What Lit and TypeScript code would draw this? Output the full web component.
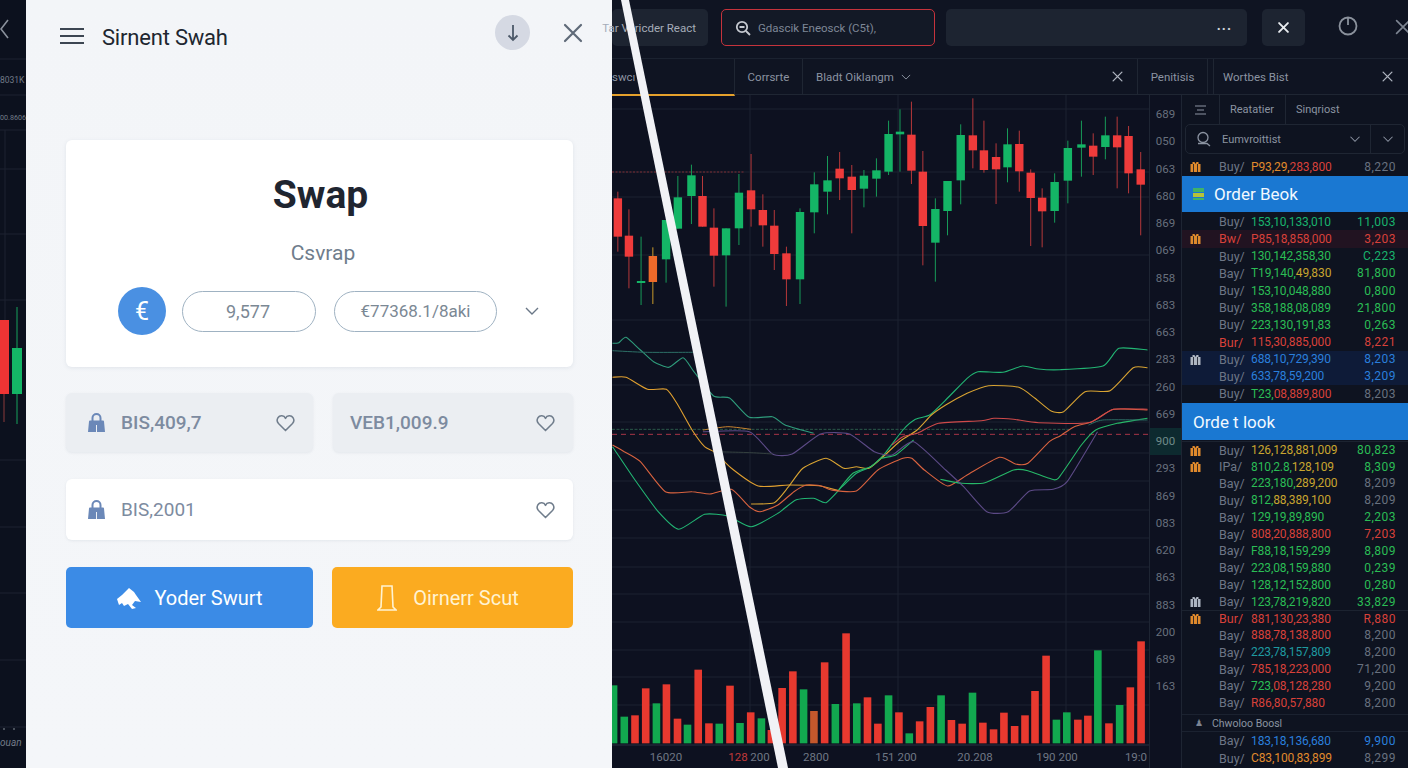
import { LitElement, html, css, svg } from "lit";
import { customElement } from "lit/decorators.js";

const X = (z: number) => 610 + z / 2.8;
const YT = (z: number) => z / 3;
const YL = (z: number) => 330 + z / 3;
const YB = (z: number) => 570 + z / 3;

// zoom-space candles: centre, bodyTop, bodyBottom, wickTop, wickBottom, colour
const candles: [number, number, number, number, number, string][] = [
  [22,595,710,575,755,"r"],[53,707,770,628,865,"r"],[87,843,848,710,915,"g"],[120,768,846,742,912,"o"],
  [157,660,778,660,848,"g"],[190,592,686,528,686,"g"],[228,526,588,494,672,"g"],[259,588,680,528,680,"r"],
  [291,683,767,625,860,"r"],[325,685,766,685,920,"g"],[361,578,685,522,735,"g"],[395,571,628,462,680,"r"],
  [428,630,676,583,740,"r"],[460,677,762,630,810,"r"],[494,760,838,740,918,"r"],[532,636,838,625,912,"g"],
  [572,553,637,517,700,"g"],[609,541,575,468,643,"g"],[643,506,535,456,600,"r"],[677,530,570,495,700,"r"],
  [711,527,566,510,622,"g"],[746,511,536,475,590,"g"],[780,402,515,362,525,"g"],[812,395,403,328,515,"g"],
  [844,404,512,305,552,"r"],[876,515,678,453,796,"r"],[911,627,728,595,845,"g"],[945,543,633,543,706,"g"],
  [982,405,541,373,613,"g"],[1016,406,451,295,505,"r"],[1047,451,510,362,518,"r"],[1081,471,508,430,612,"r"],
  [1113,433,502,385,547,"g"],[1146,432,514,392,575,"r"],[1178,518,594,508,738,"r"],[1210,593,634,565,742,"r"],
  [1245,546,633,520,668,"g"],[1282,444,542,422,610,"g"],[1320,433,443,362,530,"g"],[1353,437,470,400,525,"r"],
  [1387,406,441,350,478,"g"],[1420,406,442,350,565,"r"],[1452,408,520,378,580,"r"],[1486,508,554,456,706,"r"],
];

const bars: [number, number, string][] = [
  [10,346,"g"],[40,440,"g"],[70,436,"r"],[100,355,"r"],[130,400,"g"],[158,343,"r"],[189,446,"r"],[217,464,"g"],
  [247,299,"r"],[277,460,"r"],[306,461,"g"],[336,347,"r"],[364,459,"g"],[394,427,"r"],[424,445,"g"],[452,480,"r"],
  [482,354,"r"],[512,304,"r"],[542,358,"g"],[571,423,"o"],[601,277,"r"],[631,402,"g"],[661,190,"r"],[691,400,"g"],
  [721,382,"r"],[750,461,"r"],[780,376,"g"],[809,427,"r"],[838,490,"g"],[867,454,"r"],[897,411,"r"],[927,376,"g"],
  [956,450,"r"],[986,461,"r"],[1015,368,"g"],[1044,458,"r"],[1074,478,"r"],[1103,428,"r"],[1133,468,"r"],[1162,436,"r"],
  [1190,363,"r"],[1221,257,"r"],[1250,449,"g"],[1279,427,"g"],[1310,449,"r"],[1338,437,"r"],[1366,241,"g"],[1397,460,"r"],
  [1427,405,"g"],[1457,352,"r"],[1487,214,"r"],
];

const lines: [string, number, number[][]][] = [
  ["#2f9d7c",1.1,[[7,40],[25,38],[45,22],[85,60],[122,95],[165,112],[205,83],[235,125],[290,198],[335,204],[390,262],[455,260],[490,285],[570,310]]],
  ["#2d6f66",1,[[7,62],[100,67],[235,67]]],
  ["#22b573",1.1,[[7,350],[70,450],[135,545],[192,598],[265,553],[330,558],[395,590],[470,550],[520,510],[570,505],[605,518],[650,470],[690,430],[730,410],[770,370],[820,300],[855,268],[895,255],[940,210],[1000,145],[1030,125],[1100,127],[1155,108],[1200,117],[1260,119],[1380,108],[1425,55],[1505,60]]],
  ["#e0a030",1.1,[[7,142],[45,142],[105,178],[158,178],[190,225],[230,300],[265,350],[295,368],[340,415],[415,468],[500,465],[585,467],[640,482]]],
  ["#d9a432",1.1,[[395,522],[460,518],[500,470],[540,415],[605,385],[655,415],[690,410],[725,415],[770,375],[810,335],[860,300],[900,255],[940,225],[1000,190],[1060,167],[1145,172],[1190,205],[1235,243],[1270,245],[1330,185],[1400,182],[1465,113],[1505,113]]],
  ["#d9633f",1.1,[[7,345],[40,365],[85,395],[155,485],[230,485],[280,492],[340,478],[390,530],[420,545],[470,525],[515,485],[550,465],[590,467],[620,480],[690,483],[750,420],[820,385],[845,385],[880,420],[945,468],[1000,435],[1090,382],[1135,402],[1170,400],[1230,335],[1260,318],[1300,290],[1350,275],[1410,238],[1505,240]]],
  ["#cf4a4a",1.1,[[790,345],[820,320],[860,310],[920,280],[1040,272],[1075,265],[1130,268],[1200,278],[1340,278],[1410,238],[1505,238]]],
  ["#c9852f",1,[[260,300],[330,290],[395,298]]],
  ["#27b868",1.1,[[640,480],[680,430],[730,410],[760,385],[800,375],[850,330]]],
  ["#27b868",1.1,[[925,448],[985,460],[1050,458],[1130,420],[1170,422],[1230,445],[1255,445],[1320,345],[1360,300],[1420,280],[1505,265]]],
  ["#5c4a86",1.1,[[260,305],[390,305],[455,372],[510,372],[590,312],[670,312],[740,365],[790,375],[850,335],[940,420],[990,470],[1055,545],[1115,545],[1175,483],[1240,478],[1280,455],[1365,305]]],
  ["#34403f",1,[[295,365],[395,368],[455,372]]],
  ["#2d6f66",1,[[1340,285],[1380,270],[1505,270]]],
];

const smooth = (p: number[][]) => {
  const q = p.map(([x, y]) => [X(x), YL(y)]);
  let d = `M${q[0][0].toFixed(1)} ${q[0][1].toFixed(1)}`;
  for (let i = 0; i < q.length - 1; i++) {
    const a = q[Math.max(i - 1, 0)], b = q[i], c = q[i + 1], e = q[Math.min(i + 2, q.length - 1)];
    const t = 0.1;
    d += ` C${(b[0] + (c[0] - a[0]) * t).toFixed(1)} ${(b[1] + (c[1] - a[1]) * t).toFixed(1)} ${(c[0] - (e[0] - b[0]) * t).toFixed(1)} ${(c[1] - (e[1] - b[1]) * t).toFixed(1)} ${c[0].toFixed(1)} ${c[1].toFixed(1)}`;
  }
  return d;
};

const hLines = [109,172,197,255,320,385,422,453,481,510,538,567,594,622,650,677,705];
const vLines = [750,898,1066];
const axis = ["689","050","063","680","869","069","858","683","663","283","260","669","900","293","869","083","620","863","883","200","689","163"];
const timeLabels: [number, string][] = [[666,"16020"],[760,"200"],[816,"2800"],[896,"151 200"],[975,"20.208"],[1057,"190 200"],[1136,"19:0"]];

type Seg = [string, string];
type Row = { i?: string; b: string; bc?: string; p: Seg[]; s: string; sc: string; t?: string };

const first: Row[] = [{ i: "o", b: "Buy/", p: [["P93,29,", "o"], ["283,800", "r"]], s: "8,220", sc: "gy" }];
const second: Row[] = [
  { b: "Buy/", p: [["153,10,133,010", "t"]], s: "11,003", sc: "t" },
  { i: "o", b: "Bw/", bc: "r", p: [["P85,18,858,000", "r"]], s: "3,203", sc: "r", t: "tr" },
  { b: "Buy/", p: [["130,142,358,30", "g"]], s: "C,223", sc: "t" },
  { b: "Bay/", p: [["T19,140,", "g"], ["49,830", "y"]], s: "81,800", sc: "g" },
  { b: "Buy/", p: [["153,10,048,880", "g"]], s: "0,800", sc: "g" },
  { b: "Buy/", p: [["358,188,08,089", "g"]], s: "21,800", sc: "g" },
  { b: "Buy/", p: [["223,130,191,83", "g"]], s: "0,263", sc: "g" },
  { b: "Bur/", bc: "r", p: [["115,30,885,000", "r"]], s: "8,221", sc: "r" },
  { i: "w", b: "Buy/", p: [["688,10,729,390", "b"]], s: "8,203", sc: "b", t: "tb" },
  { b: "Buy/", p: [["633,78,59,200", "b"]], s: "3,209", sc: "b", t: "tb" },
  { b: "Buy/", p: [["T23,", "g"], ["08,889,800", "r"]], s: "8,203", sc: "gy" },
];
const third: Row[] = [
  { i: "o", b: "Buy/", p: [["126,128,881,009", "y"]], s: "80,823", sc: "g", t: "tl" },
  { i: "o", b: "IPa/", p: [["810,2.8,", "g"], ["128,109", "y"]], s: "8,309", sc: "g" },
  { b: "Bay/", p: [["223,180,", "g"], ["289,200", "y"]], s: "8,209", sc: "gy" },
  { b: "Buy/", p: [["812,", "g"], ["88,389,100", "y"]], s: "8,209", sc: "gy" },
  { b: "Bay/", p: [["129,19,89,890", "g"]], s: "2,203", sc: "g" },
  { b: "Bay/", p: [["808,20,888,800", "r"]], s: "7,203", sc: "r" },
  { b: "Bay/", p: [["F88,18,159,299", "g"]], s: "8,809", sc: "g" },
  { b: "Bay/", p: [["223,08,159,880", "g"]], s: "0,239", sc: "g" },
  { b: "Bay/", p: [["128,12,152,800", "g"]], s: "0,280", sc: "g" },
  { i: "w", b: "Bay/", p: [["123,78,219,820", "g"]], s: "33,829", sc: "g" },
  { i: "o", b: "Bur/", bc: "r", p: [["881,130,23,380", "r"]], s: "R,880", sc: "r", t: "tl" },
  { b: "Bay/", p: [["888,78,138,800", "r"]], s: "8,200", sc: "gy" },
  { b: "Bay/", p: [["223,78,157,809", "c"]], s: "8,200", sc: "gy" },
  { b: "Bay/", p: [["785,18,223,000", "r"]], s: "71,200", sc: "gy" },
  { b: "Bay/", p: [["723,", "g"], ["08,128,280", "r"]], s: "9,200", sc: "gy" },
  { b: "Bay/", p: [["R86,80,57,880", "r"]], s: "8,200", sc: "gy" },
];
const fourth: Row[] = [
  { b: "Bay/", p: [["183,18,136,680", "b"]], s: "9,900", sc: "b" },
  { b: "Buy/", p: [["C83,100,83,899", "o"]], s: "8,299", sc: "gy" },
];

const closeIcon = (size: number, cls: string) => html`<svg class=${cls} width=${size} height=${size} viewBox="0 0 20 20" fill="none" stroke="currentColor" stroke-linecap="round"><path d="M2 2 18 18M18 2 2 18" /></svg>`;
const chevron = (cls: string) => html`<svg class=${cls} width="14" height="8" viewBox="0 0 14 8" fill="none" stroke="currentColor" stroke-width="1.4"><path d="M1 1 7 7 13 1" /></svg>`;
const heart = html`<svg class="heart" width="19" height="18" viewBox="0 0 20 19" fill="none" stroke="currentColor" stroke-width="1.6" stroke-linejoin="round"><path d="M10 17.5 2.6 10A5 5 0 0 1 2 4 4.600 4.600 0 0 1 10 4.600 4.600 4.600 0 0 1 18 4 5 5 0 0 1 17.400 10Z" /></svg>`;
const lock = html`<svg class="lock" width="21" height="21" viewBox="0 0 21 21"><path d="M6.500 9V6a4 4 0 0 1 8 0v3" fill="none" stroke="currentColor" stroke-width="2" /><path d="M3 9.500a1 1 0 0 1 1-1h13a1 1 0 0 1 1 1L19 20H2Z" fill="currentColor" /><path d="M10.500 13v7" stroke="#eef1f5" stroke-width="1" /></svg>`;
const giftIcon = (c: string) => html`<svg class="gift ${c}" width="11" height="11" viewBox="0 0 11 11"><path d="M0.500 3h10v8h-10Z" fill="currentColor" /><path d="M2.500 1h2l1 2 1-2h2v2h-6Z" fill="currentColor" /><path d="M3.500 3v8M7.500 3v8" stroke="#0f1422" stroke-width="0.8" /></svg>`;

@customElement("app-root")
export class AppRoot extends LitElement {
  static styles = css`
    :host { display: block; width: 1408px; height: 768px; position: relative; overflow: hidden; background: #0d1120; font-family: Roboto, "Liberation Sans", sans-serif; }
    .app { display: flex; width: 1408px; height: 768px; }
    .sliver { width: 26px; flex: none; background: #0c111e; }
    .sliver svg { display: block; }
    .drawer { width: 586px; flex: none; box-sizing: border-box; background: linear-gradient(180deg, #f3f5f8, #f4f6f9); display: flex; flex-direction: column; padding: 0 39px 0 40px; }
    .d-head { height: 66px; margin: 0 -10px 0 -6px; display: flex; align-items: center; gap: 18px; flex: none; color: #2a313c; }
    .burger { width: 24px; height: 16px; margin-top: 5px; border-top: 2px solid #3d4652; border-bottom: 2px solid #3d4652; box-sizing: border-box; position: relative; flex: none; }
    .burger::after { content: ""; position: absolute; left: 0; right: 0; top: 5px; height: 2px; background: #3d4652; }
    .d-title { font-size: 22px; letter-spacing: -0.2px; flex: 1; margin-top: 8px; color: #20262f; }
    .round { width: 35px; height: 35px; border-radius: 50%; background: #d5d9e3; display: flex; align-items: center; justify-content: center; color: #4c5868; flex: none; margin: -1px 2px 0 0; }
    .x-d { color: #5f6a78; stroke-width: 2.2; margin-left: 13px; }
    .card { margin-top: 74px; height: 227px; background: #fff; border-radius: 6px; box-shadow: 0 1px 4px rgba(90,105,130,.12); display: flex; flex-direction: column; align-items: center; flex: none; box-sizing: border-box; padding-top: 33px; }
    .swap { font-size: 39px; font-weight: 700; color: #1f2530; line-height: 44px; margin-left: 2px; }
    .sub { font-size: 21px; color: #6f7d8c; margin-top: 24px; line-height: 24px; margin-left: 7px; }
    .pair { display: flex; align-items: center; margin-top: 22px; width: 100%; box-sizing: border-box; padding-left: 52px; }
    .euro { width: 48px; height: 48px; border-radius: 50%; background: #4a90e2; color: #fff; display: flex; align-items: center; justify-content: center; font-size: 25px; flex: none; }
    .pill { height: 41px; border: 1px solid #9fb2c2; border-radius: 21px; box-sizing: border-box; display: flex; align-items: center; justify-content: center; font-size: 18px; color: #7b8894; flex: none; }
    .p1 { width: 134px; margin-left: 16px; padding-right: 2px; }
    .p2 { width: 163px; margin-left: 18px; font-size: 17px; }
    .pair .chev { color: #6a7787; margin-left: 28px; }
    .two { display: grid; grid-template-columns: 247px 240px; column-gap: 20px; margin-top: 26px; flex: none; }
    .tile { height: 59px; border-radius: 6px; background: #ebeef2; box-shadow: 0 1px 3px rgba(90,105,130,.1); display: flex; align-items: center; box-sizing: border-box; padding: 0 18px 0 20px; font-size: 19px; color: #7d8ba0; font-weight: 500; }
    .tile span { flex: 1; margin-left: 14px; }
    .tile .plain { margin-left: -3px; }
    .white { margin-top: 27px; height: 61px; background: #fff; color: #7d8ba0; font-weight: 400; flex: none; }
    .lock { color: #6b88b8; flex: none; }
    .heart { color: #707d8c; flex: none; }
    .btns { display: grid; grid-template-columns: 247px 241px; column-gap: 19px; margin-top: 27px; flex: none; }
    .btn { height: 61px; border-radius: 5px; display: flex; align-items: center; justify-content: center; gap: 12px; font-size: 20px; color: #fff; }
    .blue { background: #3b8be6; }
    .amber { background: #fbab20; color: #fff3d2; gap: 16px; padding-right: 9px; }
    .main { width: 796px; flex: none; display: flex; flex-direction: column; background: #0d1120; }
    .top { height: 58px; flex: none; box-sizing: border-box; padding: 9px 0 0; display: flex; background: #0f1422; align-items: flex-start; }
    .chip { height: 37px; border-radius: 5px; background: #1d2431; display: flex; align-items: center; color: #a5acb8; font-size: 11.500px; box-sizing: border-box; flex: none; }
    .c1 { width: 96px; justify-content: flex-end; padding-right: 12px; white-space: nowrap; }
    .c2 { width: 214px; margin-left: 13px; background: #131926; border: 1px solid #c5333c; padding-left: 13px; gap: 7px; color: #7e8796; }
    .c3 { width: 301px; margin-left: 11px; justify-content: flex-end; padding-right: 15px; color: #cfd3da; letter-spacing: 1px; font-size: 14px; font-weight: 700; padding-bottom: 6px; }
    .c4 { width: 43px; margin-left: 15px; justify-content: center; color: #e9ecf0; }
    .x-c { stroke-width: 3.4; }
    .pw { margin-left: 33px; color: #8a919c; margin-top: 7px; flex: none; }
    .x-t { color: #7d8592; stroke-width: 2; margin-left: 37px; margin-top: 10px; flex: none; }
    .tabs { height: 37px; flex: none; display: flex; box-sizing: border-box; border-top: 1px solid #1b2230; border-bottom: 1px solid #1f2633; font-size: 11.500px; color: #8b93a1; background: #0f1422; position: relative; z-index: 1; }
    .tab { display: flex; align-items: center; flex: none; box-sizing: border-box; border-right: 1px solid #1f2633; white-space: nowrap; }
    .t1 { width: 123px; border-bottom: 2px solid #e5a12c; height: 37px; padding-left: 0; }
    .t2 { width: 68px; justify-content: center; }
    .t3 { width: 335px; padding-left: 13px; gap: 5px; }
    .t3 .x-s, .t5 .x-s { margin-left: auto; color: #aeb4bf; stroke-width: 2.4; }
    .t3 .x-s { margin-right: 14px; }
    .t3 .chev { color: #8b93a1; transform: scale(.7); }
    .t4 { width: 70px; justify-content: center; margin-right: 5px; }
    .t5 { flex: 1; padding-left: 9px; border-right: 0; border-left: 1px solid #1f2633; }
    .t5 .x-s { margin-right: 15px; }
    .body { flex: 1; min-height: 0; display: flex; }
    .chart { width: 537px; flex: none; display: block; background: #0d1120; }
    .axis { width: 32px; flex: none; box-sizing: border-box; border-left: 1px solid #1e2533; padding-top: 6px; font-size: 11.500px; color: #68707d; display: flex; flex-direction: column; align-items: center; }
    .axis div { height: 27.250px; line-height: 27.250px; flex: none; width: 100%; text-align: center; }
    .axis .hl { background: #0d2a2f; color: #6f8a8a; }
    .book { width: 227px; flex: none; box-sizing: border-box; border-left: 1px solid #1e2533; background: #0e1320; display: flex; flex-direction: column; color: #6d7686; font-size: 12px; }
    .subt { height: 29px; flex: none; display: flex; align-items: center; font-size: 11px; color: #8b93a1; }
    .subt > * { flex: none; display: flex; align-items: center; height: 100%; box-sizing: border-box; }
    .st0 { width: 38px; justify-content: center; border-right: 1px solid #1f2633; }
    .st1 { width: 66px; padding-left: 10px; border-right: 1px solid #1f2633; }
    .st2 { padding-left: 10px; }
    .srch { margin: 0 3px 0 3px; height: 30px; flex: none; border: 1px solid #1f2633; border-radius: 5px; display: flex; align-items: center; box-sizing: border-box; font-size: 11px; color: #8b93a1; }
    .srch svg.mag { margin: 0 11px 0 10px; flex: none; }
    .srch span { flex: 1; }
    .srch .chev { transform: scale(.75); }
    .srch .div { width: 1px; height: 100%; background: #1f2633; margin: 0 10px 0 8px; }
    .srch .last { margin-right: 9px; }
    .rows { flex: none; padding-top: 4px; }
    .rows.r2 { padding-top: 1px; }
    .rows.tight { padding-top: 1px; }
    .row { height: 17.200px; box-sizing: border-box; display: grid; grid-template-columns: 37px 32px 1fr auto; align-items: center; padding-right: 12px; white-space: nowrap; }
    .rows.tight .row { height: 16.880px; }
    .rows.last { padding-top: 0; }
    .gift { margin-left: 8px; display: block; }
    .buy { color: #6d7686; font-size: 12.500px; }
    .price { letter-spacing: -0.100px; }
    .size { letter-spacing: 0.500px; }
    .g { color: #2bbd55; } .r { color: #d8413a; } .o { color: #e08a2c; } .y { color: #c8a52f; }
    .b { color: #2a7fdc; } .t { color: #19b26d; } .c { color: #1f9aa0; } .gy { color: #68717f; } .w { color: #aeb6c2; }
    .tr { background: rgba(120,20,40,.18); }
    .tb { background: rgba(20,60,140,.22); }
    .tl { border-top: 1px solid #1c2330; }
    .hdr { flex: none; height: 36px; background: #1a78d2; color: #f2f8ff; display: flex; align-items: center; font-size: 17px; gap: 9px; padding-left: 10px; }
    .h1 { margin-top: 1px; }
    .h2 { margin-top: 1px; padding-left: 11px; gap: 0; height: 37px; }
    .sect { flex: none; height: 18px; margin-top: 3px; display: flex; align-items: center; border-top: 1px solid #1b2230; border-bottom: 1px solid #1b2230; box-sizing: border-box; font-size: 10.500px; color: #8b93a1; padding-left: 30px; position: relative; }
    .sect::before { content: "♟"; position: absolute; left: 13px; font-size: 9px; color: #7b8492; }
    .diag { position: absolute; left: 612px; top: 0; width: 796px; height: 768px; pointer-events: none; z-index: 2; }
  `;

  private rows(list: Row[]) {
    return list.map((r) => html`<div class="row ${r.t ?? ""}">
      <div>${r.i ? giftIcon(r.i) : ""}</div>
      <div class="buy ${r.bc ?? ""}">${r.b}</div>
      <div class="price">${r.p.map(([t, c]) => html`<span class=${c}>${t}</span>`)}</div>
      <div class="size ${r.sc}">${r.s}</div>
    </div>`);
  }

  private chart() {
    const cc: Record<string, [string, string]> = { r: ["#ef3b3b", "#b5383a"], g: ["#14b566", "#179a58"], o: ["#ee6a2a", "#c99a2a"] };
    const bc: Record<string, string> = { r: "#e8392f", g: "#12a84f", o: "#c4582c" };
    return html`<svg class="chart" viewBox="612 95 537 673" width="537" height="673">
      ${hLines.map((y) => svg`<line x1="612" x2="1149" y1=${y} y2=${y} stroke="#1c2331" />`)}
      ${vLines.map((x) => svg`<line x1=${x} x2=${x} y1="95" y2="745" stroke="#1c2331" />`)}
      <line x1="612" x2="1149" y1="745" y2="745" stroke="#2a3140" />
      <line x1="612" x2="745" y1="172" y2="172" stroke="#7c2c32" stroke-dasharray="2 1.500" />
      ${candles.map(([x, t, b, wt, wb, c]) => svg`
        <line x1=${X(x)} x2=${X(x)} y1=${YT(wt)} y2=${YT(wb)} stroke=${cc[c][1]} stroke-width="1" />
        <rect x=${X(x) - 4.2} y=${YT(t)} width="8.400" height=${Math.max(YT(b) - YT(t), 2)} fill=${cc[c][0]} />`)}
      <line x1="612" x2="1148" y1=${YL(313)} y2=${YL(313)} stroke="#a83648" stroke-dasharray="5 4" />
      <line x1="612" x2="1070" y1=${YL(298)} y2=${YL(298)} stroke="#2b5a4a" stroke-dasharray="3 1.500" />
      ${lines.map(([c, w, p]) => svg`<path d=${smooth(p)} fill="none" stroke=${c} stroke-width=${w} />`)}
      ${bars.map(([x, t, c]) => svg`<rect x=${X(x) - 3.800} y=${YB(t)} width="7.600" height=${YB(520) - YB(t)} fill=${bc[c]} />`)}
      <g font-size="11.500" fill="#6f7784" text-anchor="middle" font-family="Roboto, sans-serif">
        ${timeLabels.map(([x, t]) => svg`<text x=${x} y="761">${t}</text>`)}
        <text x="738" y="761" fill="#c23a3a">128</text>
      </g>
    </svg>`;
  }

  render() {
    return html`<div class="app">
      <div class="sliver">
        <svg width="26" height="768" viewBox="0 0 26 768">
          <g stroke="#1c2331">
            <line x1="0" x2="26" y1="59" y2="59" /><line x1="0" x2="26" y1="95" y2="95" /><line x1="0" x2="26" y1="130" y2="130" />
            <line x1="0" x2="26" y1="169" y2="169" /><line x1="0" x2="26" y1="234" y2="234" /><line x1="0" x2="26" y1="300" y2="300" />
            <line x1="0" x2="26" y1="460" y2="460" /><line x1="0" x2="26" y1="527" y2="527" /><line x1="0" x2="26" y1="593" y2="593" />
            <line x1="0" x2="26" y1="660" y2="660" /><line x1="0" x2="26" y1="727" y2="727" /><line x1="5" x2="5" y1="130" y2="320" />
          </g>
          <path d="M8 20 1 29 8 38" fill="none" stroke="#8a919c" stroke-width="1.600" />
          <line x1="4" x2="4" y1="390" y2="422" stroke="#8a3a3a" />
          <line x1="17" x2="17" y1="307" y2="424" stroke="#17a25c" />
          <rect x="0" y="320" width="9" height="74" fill="#ee3434" />
          <rect x="12" y="348" width="10" height="46" fill="#14b566" />
          <g fill="#737b88" font-family="Roboto, sans-serif">
            <text x="0" y="83" font-size="8.500">8031K</text>
            <text x="0" y="120" font-size="7.200">00.8606</text>
            <text x="0" y="746" font-style="italic" font-size="10">ouan</text>
          </g>
          <circle cx="4" cy="729" r="0.800" fill="#9aa1ac" /><circle cx="14" cy="729" r="0.800" fill="#9aa1ac" />
        </svg>
      </div>

      <div class="drawer">
        <div class="d-head">
          <div class="burger"></div>
          <div class="d-title">Sirnent Swah</div>
          <div class="round"><svg width="14" height="18" viewBox="0 0 14 18" fill="none" stroke="currentColor" stroke-width="1.800"><path d="M7 1V16M2.500 11.500 7 16 11.500 11.500" /></svg></div>
          ${closeIcon(20, "x-d")}
        </div>
        <div class="card">
          <div class="swap">Swap</div>
          <div class="sub">Csvrap</div>
          <div class="pair">
            <div class="euro">€</div>
            <div class="pill p1">9,577</div>
            <div class="pill p2">€77368.1/8aki</div>
            ${chevron("chev")}
          </div>
        </div>
        <div class="two">
          <div class="tile">${lock}<span>BIS,409,7</span>${heart}</div>
          <div class="tile"><span class="plain">VEB1,009.9</span>${heart}</div>
        </div>
        <div class="tile white">${lock}<span>BIS,2001</span>${heart}</div>
        <div class="btns">
          <div class="btn blue">
            <svg width="26" height="24" viewBox="0 0 26 24" fill="#fff"><path d="M1 13 6 9 13 2 18 6 20 9 25 16 19 15 16 19 20 22 16 23 12 18 8 20 6 17 3 19Z" /></svg>
            Yoder Swurt
          </div>
          <div class="btn amber">
            <svg width="20" height="28" viewBox="0 0 20 28" fill="none" stroke="currentColor" stroke-width="1.600"><path d="M5 2H15L16 23 19 26H1L4 23Z" /></svg>
            Oirnerr Scut
          </div>
        </div>
      </div>

      <div class="main">
        <div class="top">
          <div class="chip c1">Tar Vericder React</div>
          <div class="chip c2">
            <svg width="16" height="16" viewBox="0 0 16 16" fill="none" stroke="#c5c9d0" stroke-width="1.800"><circle cx="7" cy="7" r="5.200" /><path d="M11 11 15 15M4.500 7H9.500" /></svg>
            Gdascik Eneosck (C5t),
          </div>
          <div class="chip c3">...</div>
          <div class="chip c4">${closeIcon(11, "x-c")}</div>
          <svg class="pw" width="20" height="20" viewBox="0 0 20 20" fill="none" stroke="currentColor" stroke-width="1.800"><circle cx="10" cy="10" r="8.500" /><path d="M10 1.500V9" /></svg>
          ${closeIcon(16, "x-t")}
        </div>
        <div class="tabs">
          <div class="tab t1">swcı</div>
          <div class="tab t2">Corrsrte</div>
          <div class="tab t3">Bladt Oiklangm ${chevron("chev")} ${closeIcon(11, "x-s")}</div>
          <div class="tab t4">Penitisis</div>
          <div class="tab t5">Wortbes Bist ${closeIcon(11, "x-s")}</div>
        </div>
        <div class="body">
          ${this.chart()}
          <div class="axis">${axis.map((a) => html`<div class=${a === "900" ? "hl" : ""}>${a}</div>`)}</div>
          <div class="book">
            <div class="subt">
              <div class="st0"><svg width="13" height="10" viewBox="0 0 13 10" fill="none" stroke="#8b93a1" stroke-width="1.200"><path d="M1 1H12M3 5H10M1 9H12" /></svg></div>
              <div class="st1">Reatatier</div>
              <div class="st2">Sinqriost</div>
            </div>
            <div class="srch">
              <svg class="mag" width="15" height="16" viewBox="0 0 15 16" fill="none" stroke="#8b93a1" stroke-width="1.300"><circle cx="7" cy="6.500" r="5" /><path d="M2 12.500H11L14 15" /></svg>
              <span>Eumvroittist</span>
              ${chevron("chev")}
              <div class="div"></div>
              ${chevron("chev last")}
            </div>
            <div class="rows">${this.rows(first)}</div>
            <div class="hdr h1">
              <svg width="13" height="14" viewBox="0 0 13 14"><path d="M1 1h11v4H1Z" fill="#3fb26a" /><path d="M1 6h11v4H1Z" fill="#b7c23a" /><path d="M1 11h11v2H1Z" fill="#3fb26a" /></svg>
              Order Beok
            </div>
            <div class="rows r2">${this.rows(second)}</div>
            <div class="hdr h2">Orde t look</div>
            <div class="rows r2 tight">${this.rows(third)}</div>
            <div class="sect">Chwoloo Boosl</div>
            <div class="rows r2 last">${this.rows(fourth)}</div>
          </div>
        </div>
      </div>
    </div>
    <svg class="diag" viewBox="612 0 796 768"><polygon points="621,0 629,0 788,768 778,768" fill="#f1f2f6" /></svg>`;
  }
}
